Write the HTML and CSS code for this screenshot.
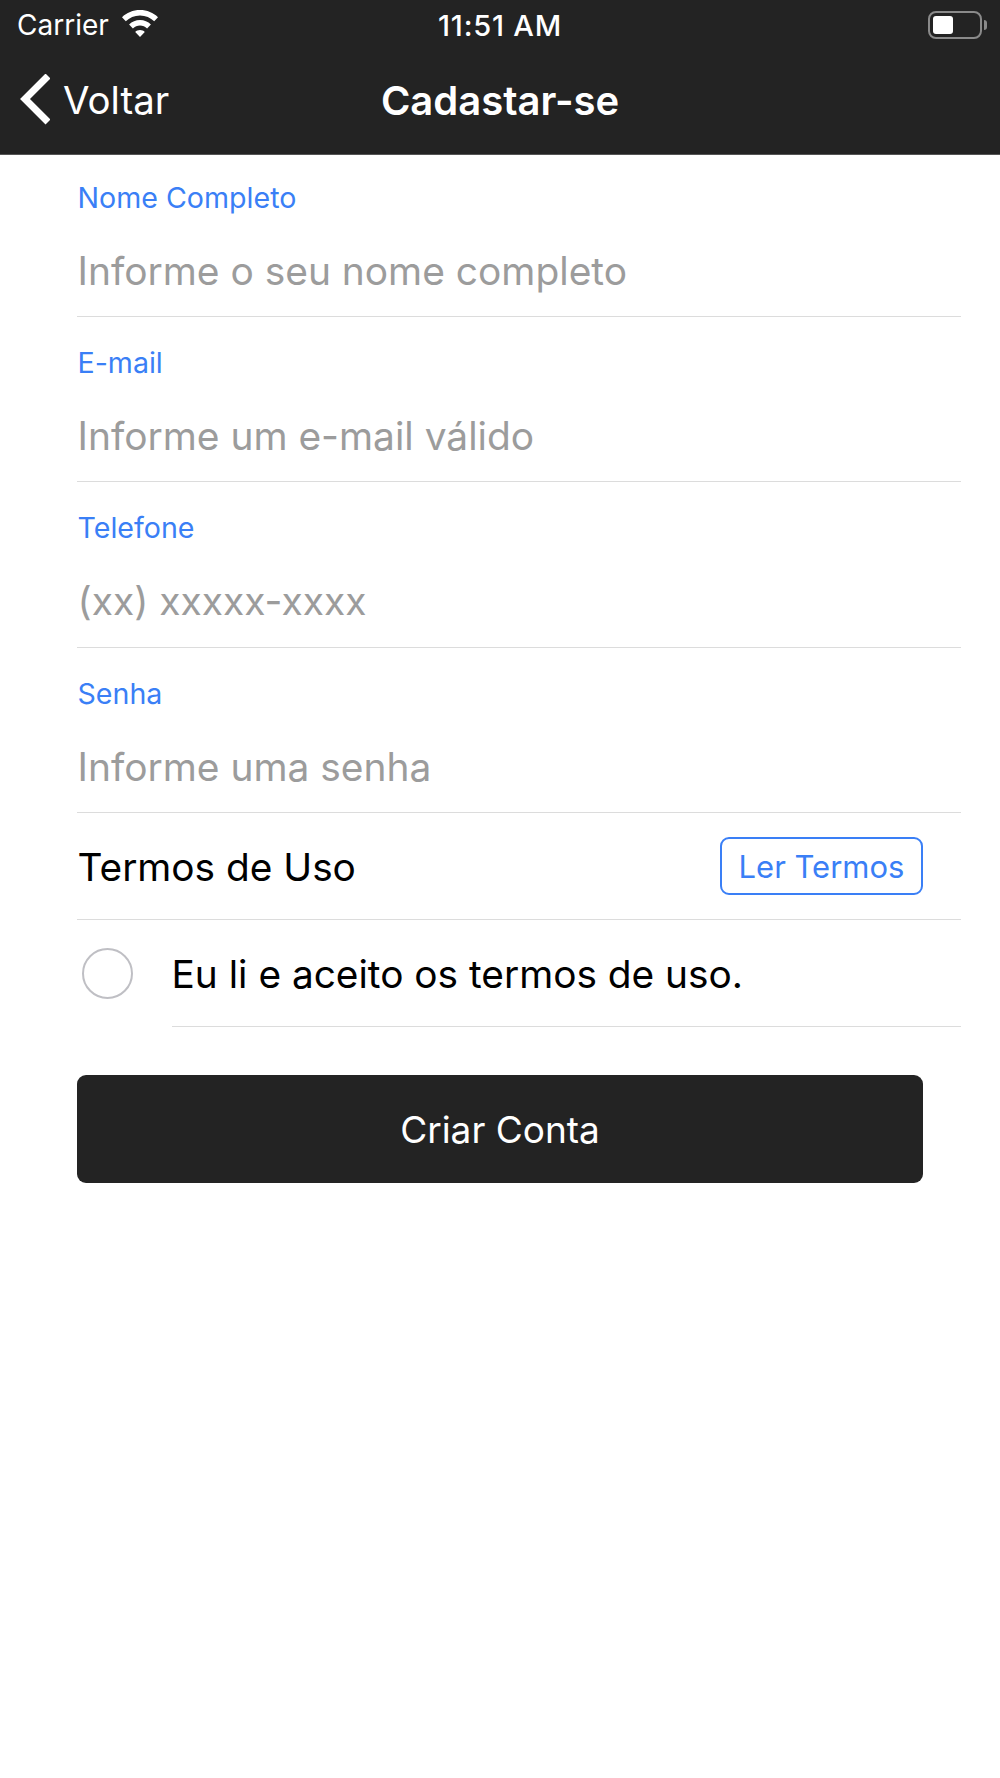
FILE: index.html
```html
<!DOCTYPE html>
<html lang="pt">
<head>
<meta charset="utf-8">
<title>Cadastar-se</title>
<link rel="stylesheet" href="styles.css">
</head>
<body>
<header class="top">
  <div class="status">
    <div class="status-left">
      <span class="carrier">Carrier</span>
      <svg class="wifi" width="38" height="28" viewBox="0 0 38 28"><path d="M19 1C12 1 5.600 3.700 1 8.200L4.800 12.200C8.400 8.600 13.400 6.400 19 6.400s10.600 2.200 14.200 5.800L37 8.200C32.400 3.700 26 1 19 1z M19 11C14.800 11 11 12.600 8.100 15.400l3.800 4C13.800 17.600 16.300 16.500 19 16.500s5.200 1.100 7.100 2.900l3.800-4C27 12.600 23.200 11 19 11z M19 21c-1.900 0-3.600.7-4.800 1.900L19 28l4.800-5.100C22.600 21.700 20.900 21 19 21z" fill="#fff"/></svg>
    </div>
    <span class="time">11:51 AM</span>
    <div class="battery"><span class="battery-body"><span class="battery-fill"></span></span><span class="battery-cap"></span></div>
  </div>
  <nav class="nav">
    <div class="back">
      <svg class="chevron" width="32" height="52" viewBox="0 0 32 52"><path d="M30 2 7 25 30 48" fill="none" stroke="#fff" stroke-width="7"/></svg>
      <span>Voltar</span>
    </div>
    <h1 class="title">Cadastar-se</h1>
  </nav>
</header>
<main class="form">
  <div class="field"><span class="label">Nome Completo</span><span class="placeholder">Informe o seu nome completo</span></div>
  <div class="field"><span class="label">E-mail</span><span class="placeholder">Informe um e-mail válido</span></div>
  <div class="field"><span class="label">Telefone</span><span class="placeholder">(xx) xxxxx-xxxx</span></div>
  <div class="field"><span class="label">Senha</span><span class="placeholder">Informe uma senha</span></div>
  <div class="terms"><span class="row-text">Termos de Uso</span><button class="read">Ler Termos</button></div>
  <div class="accept"><span class="radio"></span><span class="row-text accept-text">Eu li e aceito os termos de uso.</span></div>
  <button class="submit">Criar Conta</button>
</main>
</body>
</html>
```
FILE: styles.css
```css
* { box-sizing: border-box; }
html, body { margin: 0; padding: 0; background: #fff; }
body { font-family: Inter, "Liberation Sans", sans-serif; width: 1000px; height: 1778px; overflow: hidden; }
.top { background: #232323; height: 155px; border-bottom: 1px solid #555; color: #fff; }
.status { position: relative; height: 50px; display: flex; align-items: center; justify-content: space-between; padding: 0 13px 0 17px; }
.status-left { display: flex; align-items: center; gap: 12px; }
.carrier { font-size: 28px; }
.wifi { margin-top: -5px; }
.time { position: absolute; left: 0; right: 0; text-align: center; font-size: 29px; font-weight: 500; letter-spacing: 0.8px; }
.battery { display: flex; align-items: center; margin-left: auto; }
.battery-body { width: 54px; height: 28px; border: 2px solid #8a8a8a; border-radius: 8px; padding: 3px; display: block; }
.battery-fill { display: block; width: 20px; height: 100%; background: #fff; border-radius: 3px; }
.battery-cap { width: 3px; height: 10px; background: #8a8a8a; border-radius: 0 3px 3px 0; margin-left: 2px; }
.nav { position: relative; height: 104px; display: flex; align-items: center; padding-left: 18px; padding-bottom: 4px; }
.back { display: flex; align-items: center; gap: 13px; font-size: 38.400px; }
.title { position: absolute; left: 0; right: 0; margin: 0; text-align: center; font-size: 40px; font-weight: 600; }
.form { padding-left: 77px; width: 961px; }
.field { height: 165px; border-bottom: 1px solid #dcdcdc; display: flex; flex-direction: column; }
.field:first-child { height: 162px; }
.field:nth-child(3) { height: 166px; }
.label { font-size: 28.600px; color: #3a7ff6; line-height: 34px; margin-top: 28.500px; padding-left: 0.500px; }
.field:first-child .label { margin-top: 25.500px; }
.placeholder { font-size: 38.900px; color: #9c9c9c; line-height: 48px; margin-top: 32px; padding-left: 0.500px; }
.terms { height: 107px; border-bottom: 1px solid #dcdcdc; display: flex; align-items: center; justify-content: space-between; padding-right: 38px; padding-left: 0.500px; }
.row-text { font-size: 38.800px; color: #000; }
.read { width: 203px; height: 58px; border: 2px solid #3a7ff6; border-radius: 9px; background: #fff; color: #3a7ff6; font: 400 31px Inter, sans-serif; padding: 0; }
.accept { height: 107px; display: flex; align-items: center; position: relative; }
.accept::after { content: ""; position: absolute; left: 95px; right: 0; bottom: 0; border-bottom: 1px solid #dcdcdc; }
.radio { width: 51px; height: 51px; border: 2px solid #bfbfc4; border-radius: 50%; margin-left: 5px; }
.accept-text { margin-left: 38.500px; }
.submit { display: block; width: 846px; height: 108px; margin-top: 48px; border: 0; border-radius: 9px; background: #232323; color: #fff; font: 400 37px Inter, sans-serif; padding: 0; }
```
